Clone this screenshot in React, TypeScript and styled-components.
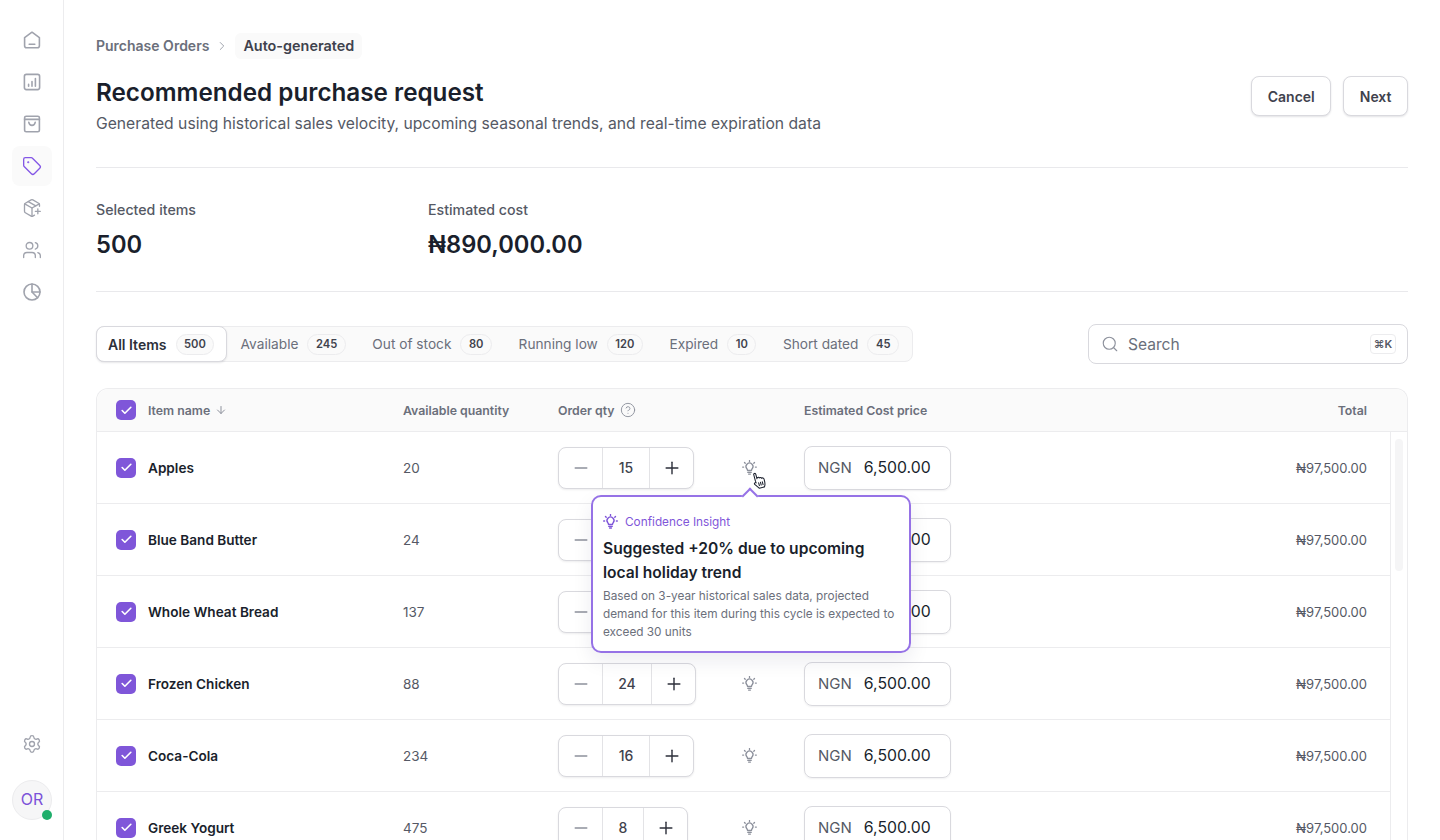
import styled, { createGlobalStyle } from "styled-components";
import {
  ArrowDown,
  Check,
  ChevronRight,
  CircleHelp,
  Minus,
  PackagePlus,
  Plus,
  Search,
  Settings,
  Tag,
  Users,
} from "lucide-react";

const GlobalStyle = createGlobalStyle`
  html, body {
    margin: 0;
    padding: 0;
    height: 840px;
    overflow: hidden;
    background: #fff;
    font-family: Inter, "Liberation Sans", sans-serif;
    color: #1a1f2c;
  }
  * { box-sizing: border-box; }
`;

function HomeIcon() {
  return (
    <svg width="20" height="20" viewBox="0 0 20 20" fill="none" stroke="currentColor" strokeWidth="1.6" strokeLinejoin="round" strokeLinecap="round">
      <path d="M2.6 7.6 10 2.2l7.4 5.4v8.2a2 2 0 0 1-2 2H4.6a2 2 0 0 1-2-2z" />
      <path d="M7.2 14.2h5.6" />
    </svg>
  );
}

function ReportIcon() {
  return (
    <svg width="20" height="20" viewBox="0 0 20 20" fill="none" stroke="currentColor" strokeWidth="1.6" strokeLinecap="round">
      <rect x="2.4" y="2.4" width="15.2" height="15.2" rx="2" />
      <path d="M6.6 14.2v-1.8M10 14.2V9.6M13.4 14.2V6.6" />
    </svg>
  );
}

function BagIcon() {
  return (
    <svg width="20" height="20" viewBox="0 0 20 20" fill="none" stroke="currentColor" strokeWidth="1.6" strokeLinecap="round" strokeLinejoin="round">
      <path d="M4.2 2.2h11.6a1.6 1.6 0 0 1 1.6 1.6v12.4a1.6 1.6 0 0 1-1.6 1.6H4.2a1.6 1.6 0 0 1-1.6-1.6V3.8a1.6 1.6 0 0 1 1.6-1.6z" />
      <path d="M2.6 5.4h14.8" />
      <path d="M6.8 8.4c.4 2 1.6 3 3.2 3s2.8-1 3.2-3" />
    </svg>
  );
}

function PieIcon() {
  return (
    <svg width="20" height="20" viewBox="0 0 20 20" fill="none" stroke="currentColor" strokeWidth="1.6" strokeLinecap="round" strokeLinejoin="round">
      <circle cx="10" cy="10" r="8" />
      <path d="M10 2v8h8" />
      <path d="M10 10l5.6 5.7" />
    </svg>
  );
}

function BulbIcon({ size = 15, weight = 1.4 }: { size?: number; weight?: number }) {
  return (
    <svg width={size} height={size} viewBox="0 0 16 16" fill="none" stroke="currentColor" strokeWidth={weight} strokeLinecap="round" strokeLinejoin="round">
      <path d="M5.9 11.2c0-1-.4-1.5-.9-2.1a3.7 3.7 0 1 1 6 0c-.5.6-.9 1.1-.9 2.1z" />
      <path d="M6.2 13.2h3.6M7 15h2" />
      <path d="M8 .6v1M2.7 2.7l.7.7M13.3 2.7l-.7.7M.7 7.5h1M14.3 7.5h1" />
    </svg>
  );
}

function HandCursor() {
  return (
    <svg width="16" height="19" viewBox="0 0 16 20" fill="#fff" stroke="#1a1f2c" strokeWidth="1.1" strokeLinejoin="round" strokeLinecap="round">
      <path d="M3.2 2.4c0-1.500 2.200-1.500 2.200 0v5l.4-1c1.500-.3 2.100.1 2.200.8 1.200-.4 2 0 2.100.9 1.300-.4 2.300.3 2.400 1.300.1 2.400 0 5-.9 6.900-.3.600-.6 1-.8 1.400H5.200c-.8-1.300-2.400-3-3.600-5.100-.7-1.300 1-2.300 1.800-1.200l-.2-2z" />
      <path d="M6 12v3M8 12v3M10 12v3" />
    </svg>
  );
}

const navItems = [
  { key: "home", icon: <HomeIcon /> },
  { key: "reports", icon: <ReportIcon /> },
  { key: "bag", icon: <BagIcon /> },
  { key: "tag", icon: <Tag size={20} strokeWidth={1.6} />, active: true },
  { key: "package", icon: <PackagePlus size={20} strokeWidth={1.6} /> },
  { key: "users", icon: <Users size={20} strokeWidth={1.6} /> },
  { key: "pie", icon: <PieIcon /> },
];

const tabs = [
  { label: "All Items", count: 500, active: true },
  { label: "Available", count: 245 },
  { label: "Out of stock", count: 80 },
  { label: "Running low", count: 120 },
  { label: "Expired", count: 10 },
  { label: "Short dated", count: 45 },
];

const rows = [
  { name: "Apples", available: 20, qty: 15, qtyWidth: 48, tip: true },
  { name: "Blue Band Butter", available: 24, qty: 12, qtyWidth: 48 },
  { name: "Whole Wheat Bread", available: 137, qty: 18, qtyWidth: 48 },
  { name: "Frozen Chicken", available: 88, qty: 24, qtyWidth: 50 },
  { name: "Coca-Cola", available: 234, qty: 16, qtyWidth: 48 },
  { name: "Greek Yogurt", available: 475, qty: 8, qtyWidth: 42 },
];

function Checkbox() {
  return (
    <CheckBoxMark>
      <Check size={13} strokeWidth={3} />
    </CheckBoxMark>
  );
}

export default function App() {
  return (
    <>
      <GlobalStyle />
      <Shell>
        <Sidebar>
          <NavList>
            {navItems.map((item) => (
              <NavItem key={item.key} $active={item.active}>
                {item.icon}
              </NavItem>
            ))}
          </NavList>
          <SidebarFoot>
            <NavItem>
              <Settings size={20} strokeWidth={1.6} />
            </NavItem>
            <Avatar>
              OR
              <OnlineDot />
            </Avatar>
          </SidebarFoot>
        </Sidebar>

        <Main>
          <Breadcrumb>
            <CrumbLink>Purchase Orders</CrumbLink>
            <ChevronRight size={14} color="#9a9ea8" strokeWidth={1.6} />
            <CrumbCurrent>Auto-generated</CrumbCurrent>
          </Breadcrumb>

          <PageHead>
            <div>
              <Title>Recommended purchase request</Title>
              <Subtitle>
                Generated using historical sales velocity, upcoming seasonal trends, and real-time expiration data
              </Subtitle>
            </div>
            <HeadActions>
              <Button>Cancel</Button>
              <Button>Next</Button>
            </HeadActions>
          </PageHead>

          <Stats>
            <Stat $width={332}>
              <StatLabel>Selected items</StatLabel>
              <StatValue>500</StatValue>
            </Stat>
            <Stat>
              <StatLabel>Estimated cost</StatLabel>
              <StatValue>₦890,000.00</StatValue>
            </Stat>
          </Stats>

          <Toolbar>
            <TabBar>
              {tabs.map((tab) => (
                <TabItem key={tab.label} $active={tab.active}>
                  {tab.label}
                  <Count>{tab.count}</Count>
                </TabItem>
              ))}
            </TabBar>
            <SearchBox>
              <Search size={18} color="#8d919c" strokeWidth={1.5} />
              <SearchText>Search</SearchText>
              <Kbd>⌘K</Kbd>
            </SearchBox>
          </Toolbar>

          <Table>
            <HeadRow>
              <Checkbox />
              <HeadCell>
                Item name <ArrowDown size={12} color="#8d919c" />
              </HeadCell>
              <HeadCell>Available quantity</HeadCell>
              <HeadCell>
                Order qty <CircleHelp size={16} color="#8d919c" strokeWidth={1.4} />
              </HeadCell>
              <span />
              <HeadCell>Estimated Cost price</HeadCell>
              <HeadCell $right>Total</HeadCell>
            </HeadRow>
            <TableBody>
              <Rows>
                {rows.map((row) => (
                  <Row key={row.name}>
                    <Checkbox />
                    <ItemName>{row.name}</ItemName>
                    <AvailableQty>{row.available}</AvailableQty>
                    <Stepper>
                      <StepButton $muted>
                        <Minus size={20} strokeWidth={1.6} />
                      </StepButton>
                      <StepValue $width={row.qtyWidth}>{row.qty}</StepValue>
                      <StepButton>
                        <Plus size={20} strokeWidth={1.7} />
                      </StepButton>
                    </Stepper>
                    <BulbCell>
                      <BulbIcon />
                      {row.tip && (
                        <>
                          <CursorWrap>
                            <HandCursor />
                          </CursorWrap>
                          <Tooltip>
                            <TipArrow />
                            <TipKicker>
                              <BulbIcon size={15} weight={1.5} />
                              Confidence Insight
                            </TipKicker>
                            <TipTitle>Suggested +20% due to upcoming local holiday trend</TipTitle>
                            <TipBody>
                              Based on 3-year historical sales data, projected demand for this item during this cycle is
                              expected to exceed 30 units
                            </TipBody>
                          </Tooltip>
                        </>
                      )}
                    </BulbCell>
                    <CostInput>
                      <Currency>NGN</Currency>
                      <CostValue>6,500.00</CostValue>
                    </CostInput>
                    <TotalCell>₦97,500.00</TotalCell>
                  </Row>
                ))}
              </Rows>
              <ScrollRail>
                <ScrollThumb />
              </ScrollRail>
            </TableBody>
          </Table>
        </Main>
      </Shell>
    </>
  );
}

const Shell = styled.div`
  display: flex;
  width: 1440px;
  height: 840px;
  overflow: hidden;
`;

const Sidebar = styled.aside`
  width: 64px;
  flex-shrink: 0;
  height: 840px;
  border-right: 1px solid #ececee;
  padding: 20px 11px 20px 12px;
  display: flex;
  flex-direction: column;
  justify-content: space-between;
`;

const NavList = styled.nav`
  display: flex;
  flex-direction: column;
  gap: 2px;
`;

const NavItem = styled.div<{ $active?: boolean }>`
  width: 40px;
  height: 40px;
  border-radius: 8px;
  display: flex;
  align-items: center;
  justify-content: center;
  color: ${(p) => (p.$active ? "#8457e6" : "#a0a3ad")};
  background: ${(p) => (p.$active ? "#fafafa" : "transparent")};
`;

const SidebarFoot = styled.div`
  display: flex;
  flex-direction: column;
  gap: 16px;
`;

const Avatar = styled.div`
  width: 40px;
  height: 40px;
  border-radius: 50%;
  position: relative;
  background: #f6f6f7;
  border: 1px solid #ececee;
  color: #7c52d9;
  font-size: 16px;
  display: flex;
  align-items: center;
  justify-content: center;
  padding-bottom: 2px;
`;

const OnlineDot = styled.span`
  position: absolute;
  right: -1px;
  bottom: -1px;
  width: 10px;
  height: 10px;
  border-radius: 50%;
  background: #1fae6b;
`;

const Main = styled.main`
  flex: 1;
  min-width: 0;
  padding: 33px 32px 0;
`;

const Breadcrumb = styled.div`
  display: flex;
  align-items: center;
  height: 26px;
  gap: 6px;
  font-size: 14px;
  font-weight: 600;
`;

const CrumbLink = styled.span`
  color: #6b6f7b;
  padding-bottom: 2px;
`;

const CrumbCurrent = styled.span`
  height: 26px;
  padding: 0 8px 2px;
  border-radius: 6px;
  background: #fafafa;
  color: #3f424d;
  font-size: 14.400px;
  display: flex;
  align-items: center;
`;

const PageHead = styled.header`
  display: flex;
  justify-content: space-between;
  align-items: flex-start;
  padding-top: 18px;
  height: 109px;
  border-bottom: 1px solid #e9e9ec;
`;

const Title = styled.h1`
  margin: 0;
  font-size: 24.250px;
  line-height: 32px;
  font-weight: 600;
  color: #1a1f2c;
`;

const Subtitle = styled.p`
  margin: 0;
  font-size: 15.700px;
  line-height: 30px;
  color: #555965;
`;

const HeadActions = styled.div`
  display: flex;
  gap: 12px;
  margin-top: -1px;
`;

const Button = styled.button`
  height: 40px;
  padding: 0 15.5px;
  border-radius: 8px;
  border: 1px solid #d9d9de;
  background: #fff;
  box-shadow: 0 1px 2px rgba(20, 20, 40, 0.12);
  font-family: inherit;
  font-size: 14px;
  font-weight: 600;
  color: #3f424d;
`;

const Stats = styled.section`
  display: flex;
  height: 124px;
  padding-top: 32px;
  border-bottom: 1px solid #e9e9ec;
`;

const Stat = styled.div<{ $width?: number }>`
  width: ${(p) => (p.$width ? `${p.$width}px` : "auto")};
`;

const StatLabel = styled.div`
  font-size: 14.200px;
  line-height: 20px;
  color: #555965;
  font-weight: 500;
`;

const StatValue = styled.div`
  margin-top: 9px;
  font-size: 23.700px;
  line-height: 32px;
  font-weight: 600;
  color: #1a1f2c;
`;

const Toolbar = styled.div`
  display: flex;
  justify-content: space-between;
  align-items: center;
  height: 40px;
  margin-top: 32px;
`;

const TabBar = styled.div`
  display: flex;
  height: 36px;
  background: #fafafa;
  border: 1px solid #ececee;
  border-radius: 8px;
`;

const TabItem = styled.div<{ $active?: boolean }>`
  display: flex;
  align-items: center;
  gap: 9px;
  padding: ${(p) => (p.$active ? "0 12px 0 11px" : "0 13.3px")};
  margin: ${(p) => (p.$active ? "-1px 0 -1px -1px" : "0")};
  font-size: ${(p) => (p.$active ? "14px" : "13.700px")};
  font-weight: ${(p) => (p.$active ? 600 : 400)};
  color: ${(p) => (p.$active ? "#2c2f3a" : "#6b6f7b")};
  background: ${(p) => (p.$active ? "#fff" : "transparent")};
  border: ${(p) => (p.$active ? "1px solid #d9d9de" : "none")};
  border-radius: 8px;
  box-shadow: ${(p) => (p.$active ? "0 1px 2px rgba(20, 20, 40, 0.1)" : "none")};
`;

const Count = styled.span`
  height: 21px;
  padding: 0 7.5px;
  border: 1px solid #ececee;
  border-radius: 11px;
  background: #fafafa;
  display: flex;
  align-items: center;
  font-size: 11.200px;
  font-weight: 600;
  color: #3f424d;
`;

const SearchBox = styled.div`
  width: 320px;
  height: 40px;
  border: 1px solid #d9d9de;
  border-radius: 8px;
  display: flex;
  align-items: center;
  gap: 9px;
  padding: 0 11px 0 12px;
`;

const SearchText = styled.span`
  flex: 1;
  font-size: 15.600px;
  color: #6b6f7b;
`;

const Kbd = styled.span`
  width: 26px;
  height: 20px;
  border: 1px solid #ececee;
  border-radius: 4px;
  display: flex;
  align-items: center;
  justify-content: center;
  font-size: 11px;
  font-weight: 600;
  color: #555965;
`;

const Table = styled.div`
  margin-top: 24px;
  border: 1px solid #ececee;
  border-bottom: none;
  border-radius: 12px 12px 0 0;
  height: 452px;
`;

const HeadRow = styled.div`
  display: grid;
  grid-template-columns: 32px 255px 155px 172px 74px 1fr auto;
  align-items: center;
  height: 43px;
  padding: 0 40px 0 19px;
  background: #fafafa;
  border-bottom: 1px solid #ececee;
  border-radius: 12px 12px 0 0;
`;

const HeadCell = styled.div<{ $right?: boolean }>`
  display: flex;
  align-items: center;
  gap: 5px;
  font-size: 12.300px;
  font-weight: 600;
  color: #6b6f7b;
  justify-content: ${(p) => (p.$right ? "flex-end" : "flex-start")};
  white-space: nowrap;
`;

const TableBody = styled.div`
  display: flex;
  height: 408px;
  overflow: hidden;
`;

const Rows = styled.div`
  flex: 1;
  min-width: 0;
  border-right: 1px solid #ececee;
`;

const Row = styled.div`
  display: grid;
  grid-template-columns: 32px 255px 155px 172px 74px 1fr auto;
  align-items: center;
  height: 72px;
  padding: 0 23px 0 19px;
  border-bottom: 1px solid #ececee;
`;

const CheckBoxMark = styled.span`
  width: 20px;
  height: 20px;
  border-radius: 5px;
  background: #7f56d9;
  color: #fff;
  display: flex;
  align-items: center;
  justify-content: center;
`;

const ItemName = styled.div`
  font-size: 13.600px;
  font-weight: 600;
  color: #1a1f2c;
`;

const AvailableQty = styled.div`
  font-size: 13.500px;
  color: #555965;
`;

const Stepper = styled.div`
  display: inline-flex;
  justify-self: start;
  height: 42px;
  border: 1px solid #d9d9de;
  border-radius: 8px;
  box-shadow: 0 1px 2px rgba(20, 20, 40, 0.08);
  background: #fff;
`;

const StepButton = styled.div<{ $muted?: boolean }>`
  width: 43px;
  display: flex;
  align-items: center;
  justify-content: center;
  color: ${(p) => (p.$muted ? "#8d919c" : "#2c2f3a")};
`;

const StepValue = styled.div<{ $width: number }>`
  width: ${(p) => p.$width}px;
  border-left: 1px solid #e3e3e6;
  border-right: 1px solid #e3e3e6;
  display: flex;
  align-items: center;
  justify-content: center;
  font-size: 14px;
  font-weight: 500;
  color: #3f424d;
`;

const BulbCell = styled.div`
  position: relative;
  height: 16px;
  padding-left: 12px;
  color: #8d919c;
  display: flex;
  align-items: center;
`;

const CursorWrap = styled.div`
  position: absolute;
  left: 22px;
  top: 11px;
  z-index: 3;
  line-height: 0;
  transform: rotate(-15deg);
`;

const Tooltip = styled.div`
  position: absolute;
  left: -139px;
  top: 35px;
  width: 320px;
  height: 158px;
  z-index: 2;
  padding: 16px 10px 0;
  background: #fff;
  border: 2px solid #9672e6;
  border-radius: 10px;
  box-shadow: 0 8px 20px rgba(30, 30, 60, 0.08);
`;

const TipArrow = styled.span`
  position: absolute;
  left: 151px;
  top: -7px;
  width: 12px;
  height: 12px;
  background: #fff;
  border-left: 2px solid #9672e6;
  border-top: 2px solid #9672e6;
  transform: rotate(45deg);
`;

const TipKicker = styled.div`
  display: flex;
  align-items: center;
  gap: 7px;
  height: 18px;
  font-size: 11.800px;
  color: #7f56d9;
`;

const TipTitle = styled.div`
  margin-top: 6px;
  max-width: 280px;
  font-size: 15.600px;
  line-height: 24px;
  font-weight: 600;
  color: #1a1f2c;
`;

const TipBody = styled.div`
  margin-top: 2px;
  font-size: 11.800px;
  line-height: 18px;
  color: #6b6f7b;
`;

const CostInput = styled.div`
  justify-self: start;
  width: 147px;
  height: 44px;
  border: 1px solid #d9d9de;
  border-radius: 8px;
  box-shadow: 0 1px 2px rgba(20, 20, 40, 0.06);
  display: flex;
  align-items: center;
  gap: 12px;
  padding-left: 13px;
  font-size: 15px;
  white-space: nowrap;
`;

const Currency = styled.span`
  color: #555965;
`;

const CostValue = styled.span`
  font-size: 15.800px;
  color: #1a1f2c;
`;

const TotalCell = styled.div`
  font-size: 13px;
  color: #555965;
  text-align: right;
`;

const ScrollRail = styled.div`
  width: 16px;
  flex-shrink: 0;
  padding: 7px 4px 0;
`;

const ScrollThumb = styled.div`
  height: 132px;
  border-radius: 4px;
  background: #f5f5f6;
`;
